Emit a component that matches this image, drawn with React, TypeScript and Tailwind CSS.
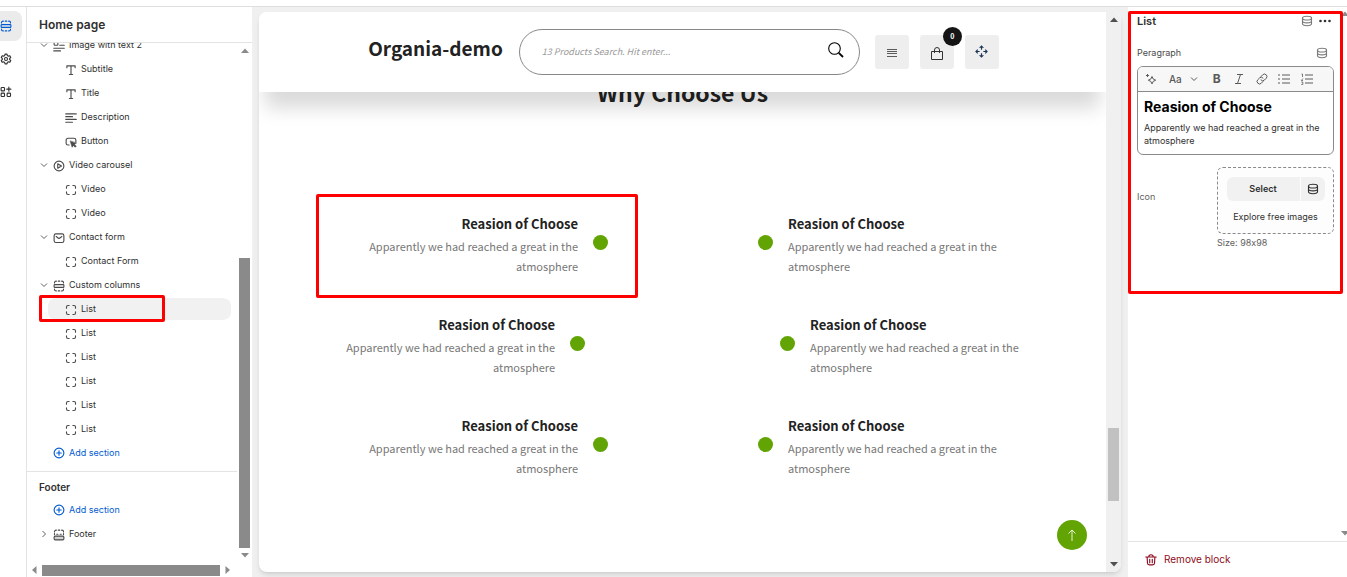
import type { ReactNode } from "react";

type IconName =
  | "section"
  | "gear"
  | "apps"
  | "imageText"
  | "text"
  | "lines"
  | "button"
  | "play"
  | "frame"
  | "mail"
  | "footer"
  | "plus"
  | "database"
  | "trash";

const glyphs: Record<IconName, ReactNode> = {
  section: (
    <>
      <path d="M2 4V3.500A2 2 0 0 1 4 1.500h.5M7 1.500h2M11.500 1.500H12a2 2 0 0 1 2 2V4M2 12v.5a2 2 0 0 0 2 2h.5M7 14.500h2M11.500 14.500H12a2 2 0 0 0 2-2V12" />
      <rect x="1.500" y="6" width="13" height="4" rx="1" fill="currentColor" fillOpacity=".25" />
    </>
  ),
  gear: (
    <>
      <path d="M6.700 1.500h2.600l.5 2 1.300.7 2-.6 1.300 2.300-1.500 1.400v1.400l1.500 1.400-1.300 2.300-2-.6-1.300.7-.5 2H6.700l-.5-2-1.300-.7-2 .6-1.300-2.300 1.500-1.400V7.300L1.600 5.900l1.300-2.300 2 .6 1.300-.7z" />
      <circle cx="8" cy="8" r="2" />
    </>
  ),
  apps: (
    <>
      <rect x="1.500" y="2" width="4.500" height="4.500" rx="1" />
      <rect x="1.500" y="9.500" width="4.500" height="4.500" rx="1" />
      <rect x="9.500" y="9.500" width="4.500" height="4.500" rx="1" />
      <path d="M11.800 1.500v5.500M9 4.200h5.500" />
    </>
  ),
  imageText: (
    <>
      <rect x="1.500" y="2" width="5" height="5" rx="1" />
      <path d="M9 3h6M9 7h6M1 11h14M1 14.500h9" />
    </>
  ),
  text: <path d="M2.500 5V2.500h11V5M8 2.500V14M5.800 14h4.400" />,
  lines: <path d="M1 2.500h14M1 6.200h9M1 9.900h14M1 13.600h9" />,
  button: (
    <>
      <path d="M5.500 12H4a2.500 2.500 0 0 1-2.500-2.500v-4A2.500 2.500 0 0 1 4 3h8a2.500 2.500 0 0 1 2.500 2.500V8" />
      <path d="m7 7 2.500 8 1.500-2.500 2.500 2.500 1.500-1.500-2.500-2.500L15 9.500z" fill="currentColor" strokeWidth=".8" />
    </>
  ),
  play: (
    <>
      <circle cx="8" cy="8" r="6.500" />
      <path d="M6.300 5v6l5-3z" />
    </>
  ),
  frame: (
    <path d="M2 5.500V4a2 2 0 0 1 2-2h1.500M10.500 2H12a2 2 0 0 1 2 2v1.500M14 10.500V12a2 2 0 0 1-2 2h-1.500M5.500 14H4a2 2 0 0 1-2-2v-1.500" />
  ),
  mail: (
    <>
      <rect x="1.500" y="2.500" width="13" height="11.500" rx="2.500" />
      <path d="m4.200 6 3.100 2.300a1.200 1.200 0 0 0 1.400 0L11.800 6" />
    </>
  ),
  footer: (
    <>
      <path d="M2 4V3.500a2 2 0 0 1 2-2h.5M7 1.500h2M11.500 1.500H12a2 2 0 0 1 2 2V4M2 6v1.500M14 6v1.500M5 7h1.500M9.500 7H11" />
      <rect x="1.500" y="9.500" width="13" height="5" rx="1.500" fill="currentColor" fillOpacity=".25" />
    </>
  ),
  plus: (
    <>
      <circle cx="8" cy="8" r="6.500" />
      <path d="M8 5v6M5 8h6" />
    </>
  ),
  database: (
    <>
      <ellipse cx="8" cy="4.200" rx="6" ry="2.500" />
      <path d="M2 4.200v7.600C2 13.200 4.700 14.300 8 14.300s6-1.100 6-2.500V4.200M2 8c0 1.400 2.700 2.500 6 2.500S14 9.400 14 8" />
    </>
  ),
  trash: (
    <>
      <path d="M1 4h14M5 4a3 3 0 0 1 6 0M2.800 4.200l.5 7.800a2.500 2.500 0 0 0 2.500 2.500h4.400a2.500 2.500 0 0 0 2.500-2.500l.5-7.800M6.300 7v4.500M9.700 7v4.500" />
    </>
  ),
};

function Icon({ name, className = "size-3" }: { name: IconName; className?: string }) {
  return (
    <svg
      viewBox="0 0 16 16"
      aria-hidden="true"
      className={`shrink-0 ${className}`}
      fill="none"
      stroke="currentColor"
      strokeWidth="1.500"
      strokeLinecap="round"
      strokeLinejoin="round"
    >
      {glyphs[name]}
    </svg>
  );
}

function Arrow({ dir, className = "text-[#8a8a8a]" }: { dir: "up" | "down" | "left" | "right"; className?: string }) {
  const d = {
    up: "M4 1.500 8 6H0z",
    down: "M0 2h8L4 6.500z",
    left: "M6.500 0v8L2 4z",
    right: "M1.500 0v8L6 4z",
  }[dir];
  return (
    <svg viewBox="0 0 8 8" aria-hidden="true" className={`size-2 shrink-0 ${className}`}>
      <path d={d} fill="currentColor" />
    </svg>
  );
}

function Chevron({ open, className = "size-2" }: { open: boolean; className?: string }) {
  return (
    <svg viewBox="0 0 8 8" aria-hidden="true" className={`shrink-0 ${className}`} fill="none" stroke="currentColor" strokeWidth="1">
      <path d={open ? "m1 2.500 3 3 3-3" : "m2.500 1 3 3-3 3"} />
    </svg>
  );
}

function Highlight({ className }: { className: string }) {
  return <span aria-hidden="true" className={`pointer-events-none absolute z-20 rounded-xs border-3 border-[#fe0000] ${className}`} />;
}

function SectionRow({ icon, label, open = true }: { icon: IconName; label: string; open?: boolean }) {
  return (
    <button type="button" aria-expanded={open} className="flex h-6 w-full items-center gap-1 pl-3 text-left">
      <span className="flex w-2.5 justify-center text-[#616161]">
        <Chevron open={open} />
      </span>
      <Icon name={icon} className="mt-0.5 size-3 text-[#4a4a4a]" />
      {label}
    </button>
  );
}

function BlockRow({ icon, label, selected = false }: { icon: IconName; label: string; selected?: boolean }) {
  return (
    <div className="relative pl-[21px]">
      <button
        type="button"
        className={`flex h-6 w-full items-center gap-1 rounded-lg border-y border-white bg-clip-padding pl-[17px] text-left ${selected ? "bg-[#f1f1f1]" : ""}`}
      >
        <Icon name={icon} className="mt-0.5 size-3 text-[#4a4a4a]" />
        {label}
      </button>
      {selected && <Highlight className="-top-0.5 -bottom-px left-3 w-[126px]" />}
    </div>
  );
}

function AddSection() {
  return (
    <button type="button" className="flex h-6 w-full items-center gap-1 pl-[26px] text-left text-[#005bd3]">
      <Icon name="plus" />
      Add section
    </button>
  );
}

const groups: { icon: IconName; label: string; blocks: { icon: IconName; label: string; selected?: boolean }[] }[] = [
  {
    icon: "imageText",
    label: "Image with text 2",
    blocks: [
      { icon: "text", label: "Subtitle" },
      { icon: "text", label: "Title" },
      { icon: "lines", label: "Description" },
      { icon: "button", label: "Button" },
    ],
  },
  {
    icon: "play",
    label: "Video carousel",
    blocks: [
      { icon: "frame", label: "Video" },
      { icon: "frame", label: "Video" },
    ],
  },
  { icon: "mail", label: "Contact form", blocks: [{ icon: "frame", label: "Contact Form" }] },
  {
    icon: "section",
    label: "Custom columns",
    blocks: [
      { icon: "frame", label: "List", selected: true },
      { icon: "frame", label: "List" },
      { icon: "frame", label: "List" },
      { icon: "frame", label: "List" },
      { icon: "frame", label: "List" },
      { icon: "frame", label: "List" },
    ],
  },
];

function Sidebar() {
  return (
    <aside className="flex w-[225px] shrink-0 flex-col bg-white text-[9px] text-[#303030]">
      <h1 className="flex h-9 shrink-0 items-center border-b border-[#e3e3e3] pl-3 text-xs font-semibold">Home page</h1>
      <div className="flex min-h-0 flex-1">
        <div className="min-w-0 flex-1 overflow-hidden">
          <div className="-mt-2.5 pr-1.5">
            {groups.map((group) => (
              <div key={group.label}>
                <SectionRow icon={group.icon} label={group.label} />
                {group.blocks.map((block, i) => (
                  <BlockRow key={i} {...block} />
                ))}
              </div>
            ))}
            <AddSection />
          </div>
          <div className="mt-1.5 border-t border-[#e3e3e3] pt-1 pr-1.5">
            <h2 className="flex h-[22px] items-center pl-3 text-[10px] font-semibold">Footer</h2>
            <AddSection />
            <SectionRow icon="footer" label="Footer" open={false} />
          </div>
        </div>
        <div className="flex w-[15px] flex-col items-center pt-1 pb-1">
          <Arrow dir="up" />
          <span className="min-h-0 flex-[203]" />
          <span className="min-h-0 w-[11px] flex-[290] bg-[#8a8a8a]" />
          <span className="h-[3px]" />
          <Arrow dir="down" />
        </div>
      </div>
      <div className="flex h-[14px] shrink-0 items-center gap-1 pr-5 pl-[3px]">
        <Arrow dir="left" />
        <span className="h-[11px] flex-1 bg-[#8a8a8a]" />
        <Arrow dir="right" />
      </div>
    </aside>
  );
}

function Rail() {
  const item = "flex h-[30px] w-[22px] items-center rounded-r-lg";
  return (
    <nav aria-label="Editor" className="flex w-[27px] shrink-0 flex-col gap-[3px] border-r border-[#e3e3e3] bg-white pt-1 text-[#303030]">
      <button type="button" aria-label="Sections" className={`${item} bg-[#ebebeb] text-[#005bd3]`}>
        <Icon name="section" />
      </button>
      <button type="button" aria-label="Theme settings" className={item}>
        <Icon name="gear" />
      </button>
      <button type="button" aria-label="App embeds" className={item}>
        <Icon name="apps" />
      </button>
    </nav>
  );
}

function Feature({ side, inset = false, marked = false }: { side: "left" | "right"; inset?: boolean; marked?: boolean }) {
  const left = side === "left";
  return (
    <li className={`relative flex w-[260px] gap-[15px] ${left ? "text-right" : "flex-row-reverse"} ${inset ? (left ? "mr-[23px]" : "ml-[22px]") : ""}`}>
      <div className="flex-1">
        <h3 className="text-[13px] leading-6 font-bold text-[#222]">Reasion of Choose</h3>
        <p className="text-[11px] leading-5 text-[#777]">Apparently we had reached a great in the atmosphere</p>
      </div>
      <span className="mt-[23px] size-[15px] rounded-full bg-[#62a403]" />
      {marked && <Highlight className="-top-[18px] -right-[30px] -bottom-[22px] -left-8" />}
    </li>
  );
}

function Preview() {
  const tool = "relative flex size-[34px] items-center justify-center rounded-[3px] bg-[#eee] text-[#333]";
  return (
    <main className="flex min-w-0 flex-1 bg-[#f0f0f0] px-[7px] pt-[5px] pb-[5px]">
      <div className="flex min-w-0 flex-1 overflow-hidden rounded-lg bg-white font-['Noto_Sans_CJK_SC',sans-serif] shadow-md">
        <div className="relative flex min-w-0 flex-1 flex-col">
          <header className="relative z-10 flex h-20 shrink-0 items-center justify-center bg-white pl-0.5 shadow-[0_22px_18px_-6px_rgba(0,0,0,0.15)]">
            <a href="#home" className="mr-4 -mt-2 text-[19px] leading-7 font-bold text-[#222]">
              Organia-demo
            </a>
            <form className="mr-[15px] flex h-[46px] w-[341px] items-center rounded-full border border-[#888] pr-[15px] pl-[22px]">
              <input
                type="text"
                aria-label="Search products"
                placeholder="13 Products Search. Hit enter..."
                className="min-w-0 flex-1 text-[9px] italic outline-none placeholder:text-[#999]"
              />
              <button type="submit" aria-label="Search" className="pb-1 text-black">
                <svg viewBox="0 0 16 16" className="size-4" fill="none" stroke="currentColor">
                  <circle cx="6.500" cy="6.500" r="5.800" strokeWidth="1.100" />
                  <path d="m10.800 10.800 4.200 4.200" strokeWidth="1.800" />
                </svg>
              </button>
            </form>
            <div className="flex gap-[11px]">
              <button type="button" aria-label="Menu" className={tool}>
                <svg viewBox="0 0 10 10" className="mt-0.5 size-2.5" stroke="currentColor">
                  <path d="M0 1.500h10M0 3.500h10M0 5.500h10M0 8.500h10" strokeWidth=".8" />
                </svg>
              </button>
              <button type="button" aria-label="Cart" className={tool}>
                <svg viewBox="0 0 12 13" className="mt-0.5 h-[13px] w-3" fill="none" stroke="currentColor">
                  <path d="M.5 4.500h11v8H.5zM3.500 6V3a2.500 2.500 0 0 1 5 0v3" />
                </svg>
                <span className="absolute -top-2 -right-2 flex size-[19px] items-center justify-center rounded-full bg-[#151515] text-[7px] font-bold text-white">
                  0
                </span>
              </button>
              <button type="button" aria-label="Compare" className={tool}>
                <svg viewBox="0 0 14 14" className="mb-0.5 size-[13px]" fill="none" stroke="#1d3557" strokeWidth="1.200">
                  <path d="M7 5V1M5 3l2-2 2 2M7 9v4M5 11l2 2 2-2M5 7H1M3 5 1 7l2 2M9 7h4M11 5l2 2-2 2" />
                </svg>
              </button>
            </div>
          </header>
          <section className="min-h-0 flex-1">
            <h2 className="-mt-[18px] text-center text-[23px] leading-9 font-bold text-[#222]">Why Choose Us</h2>
            <div className="mt-[102px] flex justify-center gap-[150px]">
              <ul className="flex flex-col items-end gap-[37px]">
                <Feature side="left" marked />
                <Feature side="left" inset />
                <Feature side="left" />
              </ul>
              <ul className="flex flex-col items-start gap-[37px]">
                <Feature side="right" />
                <Feature side="right" inset />
                <Feature side="right" />
              </ul>
            </div>
          </section>
          <a
            href="#top"
            aria-label="Back to top"
            className="absolute right-[19px] bottom-[22px] flex size-[30px] items-center justify-center rounded-full bg-[#62a403] text-white"
          >
            <svg viewBox="0 0 10 12" className="h-3 w-2.5" fill="none" stroke="currentColor" strokeOpacity=".85">
              <path d="M5 12V1M1.500 4.500 5 1l3.500 3.500" />
            </svg>
          </a>
        </div>
        <div className="relative z-20 flex w-[15px] shrink-0 flex-col items-center bg-[#f0f0f0] py-1">
          <Arrow dir="up" className="text-[#505050]" />
          <span className="flex-[404]" />
          <span className="w-[11px] flex-[73] bg-[#c1c1c1]" />
          <span className="flex-[59]" />
          <Arrow dir="down" className="text-[#505050]" />
        </div>
      </div>
    </main>
  );
}

function ToolbarList({ numbered = false }: { numbered?: boolean }) {
  return (
    <svg viewBox="0 0 12 12" aria-hidden="true" className="size-3" stroke="currentColor" fill="none">
      <path d="M4 2h8M4 6h8M4 10h8" />
      {numbered ? <path d="M.5 1h1v3M.3 7.500 2 5.500M.3 7.500H2M.3 9h1.500v2.500H.3" strokeWidth=".8" /> : <path d="M0 2h2M0 6h2M0 10h2" />}
    </svg>
  );
}

function Inspector() {
  return (
    <aside className="flex w-[219px] shrink-0 flex-col bg-white text-[9px] text-[#303030] [font-feature-settings:'calt'_0]">
      <div className="flex min-h-0 flex-1">
        <div className="min-w-0 flex-1">
          <div className="relative pr-[7px] pb-[43px] pl-[9px]">
            <Highlight className="top-1 -right-0.5 bottom-0 left-0" />
            <div className="flex h-7 items-center justify-between">
              <h2 className="text-[11px] font-semibold">List</h2>
              <div className="flex items-center gap-1.5 pr-[3px]">
                <button type="button" aria-label="Connect data source" className="text-[#7a7a7a]">
                  <Icon name="database" />
                </button>
                <button type="button" aria-label="More actions">
                  <svg viewBox="0 0 12 12" className="size-3" fill="currentColor">
                    <circle cx="1.500" cy="6" r="1.300" />
                    <circle cx="6" cy="6" r="1.300" />
                    <circle cx="10.500" cy="6" r="1.300" />
                  </svg>
                </button>
              </div>
            </div>
            <div className="mt-2.5 flex h-4 items-center justify-between pr-1.5">
              <span id="paragraph-label" className="text-[#4a4a4a]">
                Peragraph
              </span>
              <button type="button" aria-label="Connect paragraph" className="text-[#7a7a7a]">
                <Icon name="database" />
              </button>
            </div>
            <div className="mt-[5px] overflow-hidden rounded-md border border-[#8a8a8a]">
              <div className="flex h-[25px] items-center border-b border-[#8a8a8a] bg-[#f7f7f7] pl-[7px] text-[#5a5a5a]">
                <button type="button" aria-label="Generate text" className="mr-3">
                  <svg viewBox="0 0 12 12" className="size-3" fill="none" stroke="currentColor">
                    <path d="M7 3.500 8.200 6 10.700 7.200 8.200 8.400 7 10.900 5.800 8.400 3.300 7.200 5.800 6z" />
                    <path d="M2.500 1v3M1 2.500h3" />
                  </svg>
                </button>
                <button type="button" aria-label="Text style" className="mr-[13px] flex items-center gap-2 text-[10px] font-medium">
                  Aa
                  <Chevron open />
                </button>
                <button type="button" aria-label="Bold" className="mr-2.5 w-3 text-xs font-bold">
                  B
                </button>
                <button type="button" aria-label="Italic" className="mr-[11px]">
                  <svg viewBox="0 0 12 12" className="size-3" fill="none" stroke="currentColor">
                    <path d="M4 1.500h6M2 10.500h6M7.500 1.500l-3 9" />
                  </svg>
                </button>
                <button type="button" aria-label="Link" className="mr-2.5">
                  <svg viewBox="0 0 12 12" className="size-3" fill="none" stroke="currentColor" strokeLinecap="round">
                    <path d="m5 3.500 1.700-1.700a2.400 2.400 0 0 1 3.500 3.500L8.500 7a2.400 2.400 0 0 1-3.500 0M7 8.500l-1.700 1.700a2.400 2.400 0 0 1-3.500-3.500L3.500 5A2.400 2.400 0 0 1 7 5" />
                  </svg>
                </button>
                <button type="button" aria-label="Bulleted list" className="mr-[11px]">
                  <ToolbarList />
                </button>
                <button type="button" aria-label="Numbered list">
                  <ToolbarList numbered />
                </button>
              </div>
              <div
                role="textbox"
                aria-labelledby="paragraph-label"
                aria-multiline="true"
                contentEditable
                suppressContentEditableWarning
                className="px-1.5 pt-1 pb-[7px] outline-none"
              >
                <h3 className="text-sm leading-[22px] font-bold text-black">Reasion of Choose</h3>
                <p className="mt-[3px] leading-[13px]">Apparently we had reached a great in the atmosphere</p>
              </div>
            </div>
            <div className="mt-3 flex items-start justify-between">
              <span className="mt-[22px] leading-4 text-[#616161]">Icon</span>
              <div className="w-[117px]">
                <div className="flex h-[67px] flex-col items-center rounded-md border border-dashed border-[#8a8a8a] bg-[#fdfdfd] pt-[9px]">
                  <div className="flex gap-px">
                    <button type="button" className="h-6 w-[73px] rounded-l-md bg-[#f1f1f1] font-semibold">
                      Select
                    </button>
                    <button type="button" aria-label="Connect image" className="flex h-6 w-6 items-center justify-center rounded-r-md bg-[#f1f1f1]">
                      <Icon name="database" />
                    </button>
                  </div>
                  <a href="#images" className="mt-2 leading-4">
                    Explore free images
                  </a>
                </div>
                <p className="mt-px leading-4 text-[#616161]">Size: 98x98</p>
              </div>
            </div>
          </div>
        </div>
        <div className="flex w-1.5 shrink-0 flex-col justify-between overflow-hidden pt-[3px] pb-1">
          <Arrow dir="up" />
          <Arrow dir="down" />
        </div>
      </div>
      <div className="h-9 shrink-0 border-t border-[#e3e3e3]">
        <button type="button" className="flex h-[35px] items-center gap-[7px] pl-[17px] text-[10px] text-[#8e0b21]">
          <Icon name="trash" />
          Remove block
        </button>
      </div>
    </aside>
  );
}

export default function App() {
  return (
    <div className="flex h-screen flex-col overflow-hidden bg-white font-['Inter',sans-serif]">
      <div className="h-[7px] shrink-0 border-b border-[#dedede]" />
      <div className="flex min-h-0 flex-1">
        <Rail />
        <Sidebar />
        <Preview />
        <Inspector />
      </div>
    </div>
  );
}
